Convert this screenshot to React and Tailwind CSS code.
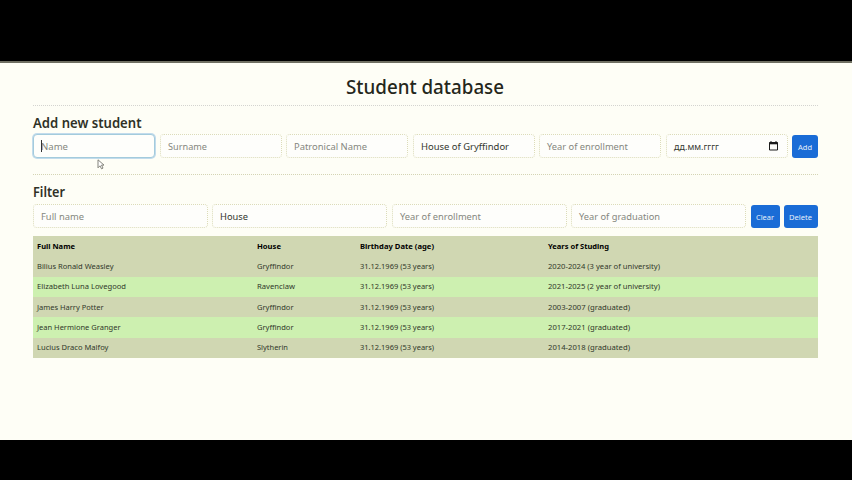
import React from "react";

const font = "font-['Noto_Sans','Open_Sans',sans-serif]";

function Fit({ w, className = "", children }) {
  return (
    <svg width={w} height="1em" className={`block shrink-0 overflow-visible ${className}`}>
      <text x="0" y="0.86em" textLength={w} lengthAdjust="spacingAndGlyphs" fill="currentColor">
        {children}
      </text>
    </svg>
  );
}

function Field({ tw, text, dark, focus, children, box }) {
  return (
    <div
      className={`flex h-6 shrink-0 items-center rounded border bg-[#fefefb] px-[7px] pt-px text-[9.7px] ${box} ${
        focus ? "border-[#a3cbdc] ring-1 ring-[#c2dbec]" : "border-dotted border-[#dcdcb8]"
      } ${dark ? "text-[#33372e]" : "text-[#85877e]"}`}
    >
      <Fit w={tw}>{text}</Fit>
      {children}
    </div>
  );
}

function Button({ box, tw, children }) {
  return (
    <button className={`flex h-[23px] shrink-0 items-center justify-center rounded-[3px] bg-[#1a6cd6] pt-px text-[7.7px] text-[#e6f0fa] ${box}`}>
      <Fit w={tw}>{children}</Fit>
    </button>
  );
}

const rows = [
  [["Bilius Ronald Weasley", 76.5], ["Gryffindor", 36.5], ["2020-2024 (3 year of university)", 112]],
  [["Elizabeth Luna Lovegood", 89], ["Ravenclaw", 38], ["2021-2025 (2 year of university)", 112]],
  [["James Harry Potter", 66.5], ["Gryffindor", 36.5], ["2003-2007 (graduated)", 82]],
  [["Jean Hermione Granger", 83.5], ["Gryffindor", 36.5], ["2017-2021 (graduated)", 82]],
  [["Lucius Draco Malfoy", 71.5], ["Slytherin", 31], ["2014-2018 (graduated)", 82]],
];

const grid = "grid grid-cols-[220.5px_103px_188px_1fr] items-center pl-[3.8px]";

export default function App() {
  return (
    <div className={`flex h-[480px] w-[852px] flex-col overflow-hidden bg-black pt-[61px] ${font}`}>
      <main className="relative h-[379px] border-t-2 border-[#6f6f62] bg-[#fefef6] pl-[33px] pr-[34px]">
        <h1 className="flex h-[43px] justify-center border-b border-dotted border-[#d4d4d0] pt-[14.5px] text-[19px] font-medium text-[#25271b]">
          <Fit w={158} className="-ml-px">Student database</Fit>
        </h1>
        <section className="h-[69px] border-b border-dotted border-[#d4d4b4] pt-[9.5px]">
          <h2 className="flex h-[18.5px] text-[13.5px] font-semibold text-[#2f3126]">
            <Fit w={108.5}>Add new student</Fit>
          </h2>
          <div className="flex justify-between">
            <Field box="w-[122px]" tw={27} text="Name" focus />
            <Field box="w-[122px]" tw={39} text="Surname" />
            <Field box="w-[122px]" tw={73} text="Patronical Name" />
            <Field box="w-[122px]" tw={88} text="House of Gryffindor" dark />
            <Field box="w-[122px]" tw={81} text="Year of enrollment" />
            <Field box="w-[122px] justify-between" tw={45} text="дд.мм.гггг" dark>
              <svg width="9" height="10" viewBox="0 0 9 10" className="mr-0.5 -mt-px shrink-0">
                <path d="M.5 1.5h8v7.5h-8zM2 0v2M7 0v2" fill="none" stroke="#1c1c1c" />
                <path d="M.5 1.3h8v2h-8z" fill="#1c1c1c" />
              </svg>
            </Field>
            <Button box="mt-px w-[26px]" tw={14}>Add</Button>
          </div>
        </section>
        <section className="pt-[9.5px]">
          <h2 className="flex h-[19.5px] text-[13.5px] font-semibold text-[#2f3126]">
            <Fit w={32}>Filter</Fit>
          </h2>
          <div className="flex justify-between">
            <Field box="w-[175px]" tw={43} text="Full name" />
            <Field box="w-[175px]" tw={28} text="House" dark />
            <Field box="w-[175px]" tw={81} text="Year of enrollment" />
            <Field box="w-[175px]" tw={81} text="Year of graduation" />
            <Button box="mt-px w-[29px]" tw={18}>Clear</Button>
            <Button box="mt-px w-[34px]" tw={23}>Delete</Button>
          </div>
        </section>
        <div className="mt-[8px] text-[7.7px] text-[#30372a]">
          <div className={`h-[20.4px] bg-[#d0d7b2] font-bold text-black ${grid}`}>
            <Fit w={38}>Full Name</Fit>
            <Fit w={24}>House</Fit>
            <Fit w={74}>Birthday Date (age)</Fit>
            <Fit w={61}>Years of Studing</Fit>
          </div>
          {rows.map(([name, house, years], i) => (
            <div key={name[0]} className={`h-[20.3px] pb-px ${i % 2 ? "bg-[#cdf0b0]" : "bg-[#d0d7b2]"} ${grid}`}>
              <Fit w={name[1]}>{name[0]}</Fit>
              <Fit w={house[1]}>{house[0]}</Fit>
              <Fit w={74}>31.12.1969 (53 years)</Fit>
              <Fit w={years[1]}>{years[0]}</Fit>
            </div>
          ))}
        </div>
        <i className="absolute left-[41px] top-[77px] h-3 w-px bg-[#333]" />
        <svg className="absolute left-[97px] top-[96px]" width="8" height="12" viewBox="0 0 8 12">
          <path d="M1 .8v8l2-2 1.5 3 1.5-.7-1.5-3H7z" fill="#fff" stroke="#77776e" strokeWidth=".9" />
        </svg>
      </main>
    </div>
  );
}
